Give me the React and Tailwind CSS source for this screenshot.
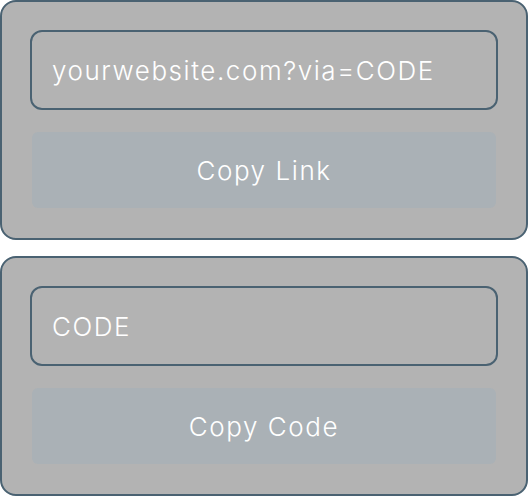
export default function App() {
  const cards = [
    { value: 'yourwebsite.com?via=CODE', label: 'Copy Link' },
    { value: 'CODE', label: 'Copy Code' },
  ];

  return (
    <div className="flex w-[528px] flex-col gap-4 bg-white font-['Inter',sans-serif] font-light">
      {cards.map((card) => (
        <div
          key={card.label}
          className="flex h-[240px] flex-col gap-5 rounded-2xl border-2 border-[#4a6272] bg-[#b3b3b3] p-7"
        >
          <div className="flex h-20 items-center rounded-xl border-2 border-[#4a6272] px-5 text-[26px] tracking-[0.06em] text-white">
            {card.value}
          </div>
          <button
            type="button"
            className="flex h-20 items-center justify-center rounded-lg border-2 border-transparent bg-[#aab1b6] bg-clip-padding text-[26px] font-light tracking-[0.06em] text-white"
          >
            {card.label}
          </button>
        </div>
      ))}
    </div>
  );
}
